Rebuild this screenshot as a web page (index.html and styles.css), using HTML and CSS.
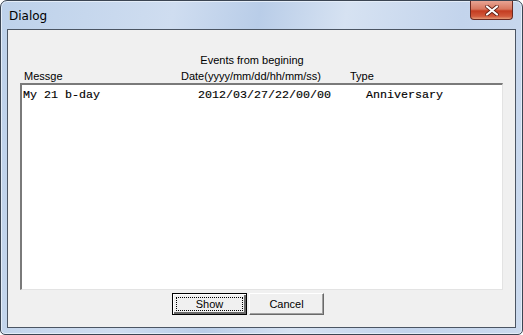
FILE: index.html
```html
<!DOCTYPE html>
<html lang="en">
<head>
    <meta charset="utf-8">
    <title>Dialog</title>
    <link rel="stylesheet" href="styles.css">
</head>
<body>
    <div class="window">
        <div class="titlebar">
            <span class="title">Dialog</span>
            <button class="close" aria-label="Close">
                <svg width="14" height="11" viewBox="0 0 14 11">
                    <path d="M2 1.5 L12 9.5 M12 1.5 L2 9.5" stroke="#5a1a10" stroke-width="3.6" stroke-linecap="round"/>
                    <path d="M2 1.5 L12 9.5 M12 1.5 L2 9.5" stroke="#fff" stroke-width="2.2" stroke-linecap="round"/>
                </svg>
            </button>
        </div>
        <div class="client">
            <p class="caption">Events from begining</p>
            <div class="cols">
                <span class="col-msg">Messge</span>
                <span class="col-date">Date(yyyy/mm/dd/hh/mm/ss)</span>
                <span class="col-type">Type</span>
            </div>
            <div class="listbox">
                <div class="row">
                    <span class="cell-msg">My 21 b-day</span>
                    <span class="cell-date">2012/03/27/22/00/00</span>
                    <span class="cell-type">Anniversary</span>
                </div>
            </div>
            <div class="buttons">
                <button class="btn btn-default"><span class="focus">Show</span></button>
                <button class="btn">Cancel</button>
            </div>
        </div>
    </div>
</body>
</html>
```
FILE: styles.css
```css
*{margin:0; padding:0; box-sizing:border-box;}
body{
    width:523px; height:335px;
    overflow:hidden;
    background:#fff;
    font:11px "Liberation Sans", "DejaVu Sans", sans-serif;
}
.window{
    width:523px; height:335px;
    border:1px solid #3b4553;
    border-radius:7px 7px 5px 5px;
    background:linear-gradient(100deg, #bdd1ea 0%, #cfddf0 30%, #b9cde8 45%, #d6e2f2 60%, #c3d4ec 80%, #cbdaee 100%);
    padding:0 6px 6px 6px;
    display:flex;
    flex-direction:column;
    box-shadow:inset 0 0 0 1px #e4edf8;
}
.titlebar{
    height:28px;
    display:flex;
    align-items:flex-start;
    justify-content:space-between;
}
.title{
    font:12px "DejaVu Sans", sans-serif;
    color:#000;
    margin:8px 0 0 2px;
}
.close{
    width:43px; height:19px;
    margin-right:3px;
    border:1px solid #6b2a22;
    border-top:none;
    border-radius:0 0 4px 4px;
    background:linear-gradient(#e8a493 0%, #d8775f 45%, #c43c21 55%, #d25a3c 85%, #e49a78 100%);
    display:flex;
    align-items:center;
    justify-content:center;
}
.client{
    flex:1;
    background:#f0f0f0;
    border:1px solid #4b5563;
    padding:0 12px;
    display:flex;
    flex-direction:column;
}
.caption{
    text-align:center;
    margin-top:23px;
    height:14px;
    line-height:14px;
    padding-right:19px;
}
.cols{
    display:flex;
    height:14px;
    line-height:14px;
    margin-top:2px;
}
.col-msg{width:161px; padding-left:4px;}
.col-date{width:169px;}
.listbox{
    flex:1;
    background:#fff;
    border-top:2px solid #7a7a7a;
    border-left:2px solid #7a7a7a;
    border-right:1px solid #e3e3e3;
    border-bottom:1px solid #e3e3e3;
}
.row{
    display:flex;
    font:11.67px "Liberation Mono", monospace;
    -webkit-text-stroke:0.15px #000;
    color:#000;
    height:14px;
    line-height:14px;
    margin-top:3px;
    padding-left:1px;
}
.cell-msg{width:175px;}
.cell-date{width:168px;}
.buttons{
    display:flex;
    gap:2px;
    padding:3px 0 12px 152px;
}
.btn{
    width:75px; height:22px;
    font:11px "Liberation Sans", "DejaVu Sans", sans-serif;
    color:#000;
    background:#f0f0f0;
    border:1px solid;
    border-color:#fff #696969 #696969 #fff;
    box-shadow:inset -1px -1px 0 #a0a0a0;
}
.btn-default{
    border:1px solid #000;
    box-shadow:inset 1px 1px 0 #fff, inset -2px -2px 0 #696969;
    padding:3px;
}
.focus{
    display:block;
    height:100%;
    line-height:12px;
    border:1px dotted #000;
}
```
